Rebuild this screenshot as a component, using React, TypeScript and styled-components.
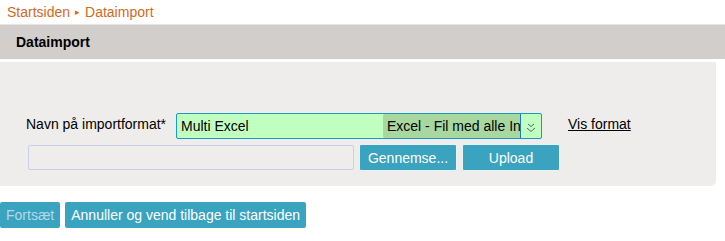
import React from "react";
import styled, { createGlobalStyle } from "styled-components";

const Global = createGlobalStyle`
  html, body { margin: 0; padding: 0; background: #ffffff; }
  body { font-family: "Liberation Sans", Arial, sans-serif; font-size: 14px; color: #000; }
`;

const Page = styled.div`
  width: 725px;
  display: flex;
  flex-direction: column;
`;

const Breadcrumb = styled.div`
  height: 24px;
  display: flex;
  align-items: center;
  padding-left: 7px;
  color: #d2691e;
  font-size: 14px;
  gap: 5px;
`;

const Crumb = styled.span`
  color: #d2691e;
`;

const Sep = styled.span`
  font-size: 9px;
  color: #d2691e;
`;

const Header = styled.div`
  height: 34px;
  background: #d1cecb;
  border-top: 1px solid #e6e4e2;
  display: flex;
  align-items: center;
  padding-left: 16px;
  font-weight: bold;
  font-size: 14px;
`;

const Panel = styled.div`
  margin-top: 3px;
  width: 716px;
  height: 124px;
  background: #eeedeb;
  border-radius: 0 0 5px 0;
  box-sizing: border-box;
  padding: 51px 0 0 26px;
  display: flex;
  flex-direction: column;
  gap: 5px;
`;

const Row = styled.div`
  display: flex;
  align-items: center;
`;

const Label = styled.div`
  width: 150px;
  margin-top: -4px;
`;

const Select = styled.div`
  width: 366px;
  height: 26px;
  box-sizing: border-box;
  border: 1px solid #1a9bc7;
  border-radius: 2px;
  background: #c0ffc0;
  display: flex;
  align-items: center;
  padding-left: 4px;
  font-size: 14px;
`;

const SelectText = styled.span`
  flex: 1;
  white-space: nowrap;
`;

const Highlight = styled.span`
  width: 138px;
  height: 24px;
  background: #a8d8a0;
  display: flex;
  align-items: center;
  padding-left: 4px;
  box-sizing: border-box;
  overflow: hidden;
  white-space: nowrap;
  border-right: 1px solid #1a7bc7;
  border-radius: 2px 0 0 2px;
`;

const Chevron = styled.svg`
  width: 20px;
  height: 24px;
  flex: none;
`;

const LinkText = styled.a`
  margin-left: 26px;
  margin-top: -4px;
  color: #000;
  text-decoration: underline;
  cursor: pointer;
`;

const FileBox = styled.div`
  width: 326px;
  height: 25px;
  box-sizing: border-box;
  border: 1px solid #c8d0ee;
  border-radius: 2px;
  background: #eeedeb;
  margin-left: 2px;
`;

const Button = styled.button<{ $w: number }>`
  height: 27px;
  width: ${(p) => p.$w}px;
  background: #3aa3c0;
  color: #ffffff;
  border: 1px solid #e9f2f4;
  border-radius: 2px;
  font-family: "Liberation Sans", Arial, sans-serif;
  font-size: 14px;
  margin-left: 5px;
  cursor: pointer;
`;

const Footer = styled.div`
  margin-top: 16px;
  display: flex;
  gap: 5px;
`;

const FooterButton = styled.button<{ $disabled?: boolean }>`
  height: 26px;
  padding: 0 6px;
  background: #3aa3c0;
  color: ${(p) => (p.$disabled ? "#b3d9e4" : "#ffffff")};
  border: none;
  border-radius: 2px;
  font-family: "Liberation Sans", Arial, sans-serif;
  font-size: 14px;
`;

export default function App() {
  return (
    <Page>
      <Global />
      <Breadcrumb>
        <Crumb>Startsiden</Crumb>
        <Sep>▸</Sep>
        <Crumb>Dataimport</Crumb>
      </Breadcrumb>
      <Header>Dataimport</Header>
      <Panel>
        <Row>
          <Label>Navn på importformat*</Label>
          <Select>
            <SelectText>Multi Excel</SelectText>
            <Highlight>Excel - Fil med alle Informationer</Highlight>
            <Chevron viewBox="0 0 20 24">
              <path d="M7 10 L10 12.5 L13 10" fill="none" stroke="#4a6a7a" strokeWidth="1" />
              <path d="M6 14 L10 17.5 L14 14" fill="none" stroke="#4a6a7a" strokeWidth="1" />
            </Chevron>
          </Select>
          <LinkText>Vis format</LinkText>
        </Row>
        <Row>
          <FileBox />
          <Button $w={98}>Gennemse...</Button>
          <Button $w={98}>Upload</Button>
        </Row>
      </Panel>
      <Footer>
        <FooterButton $disabled>Fortsæt</FooterButton>
        <FooterButton>Annuller og vend tilbage til startsiden</FooterButton>
      </Footer>
    </Page>
  );
}
